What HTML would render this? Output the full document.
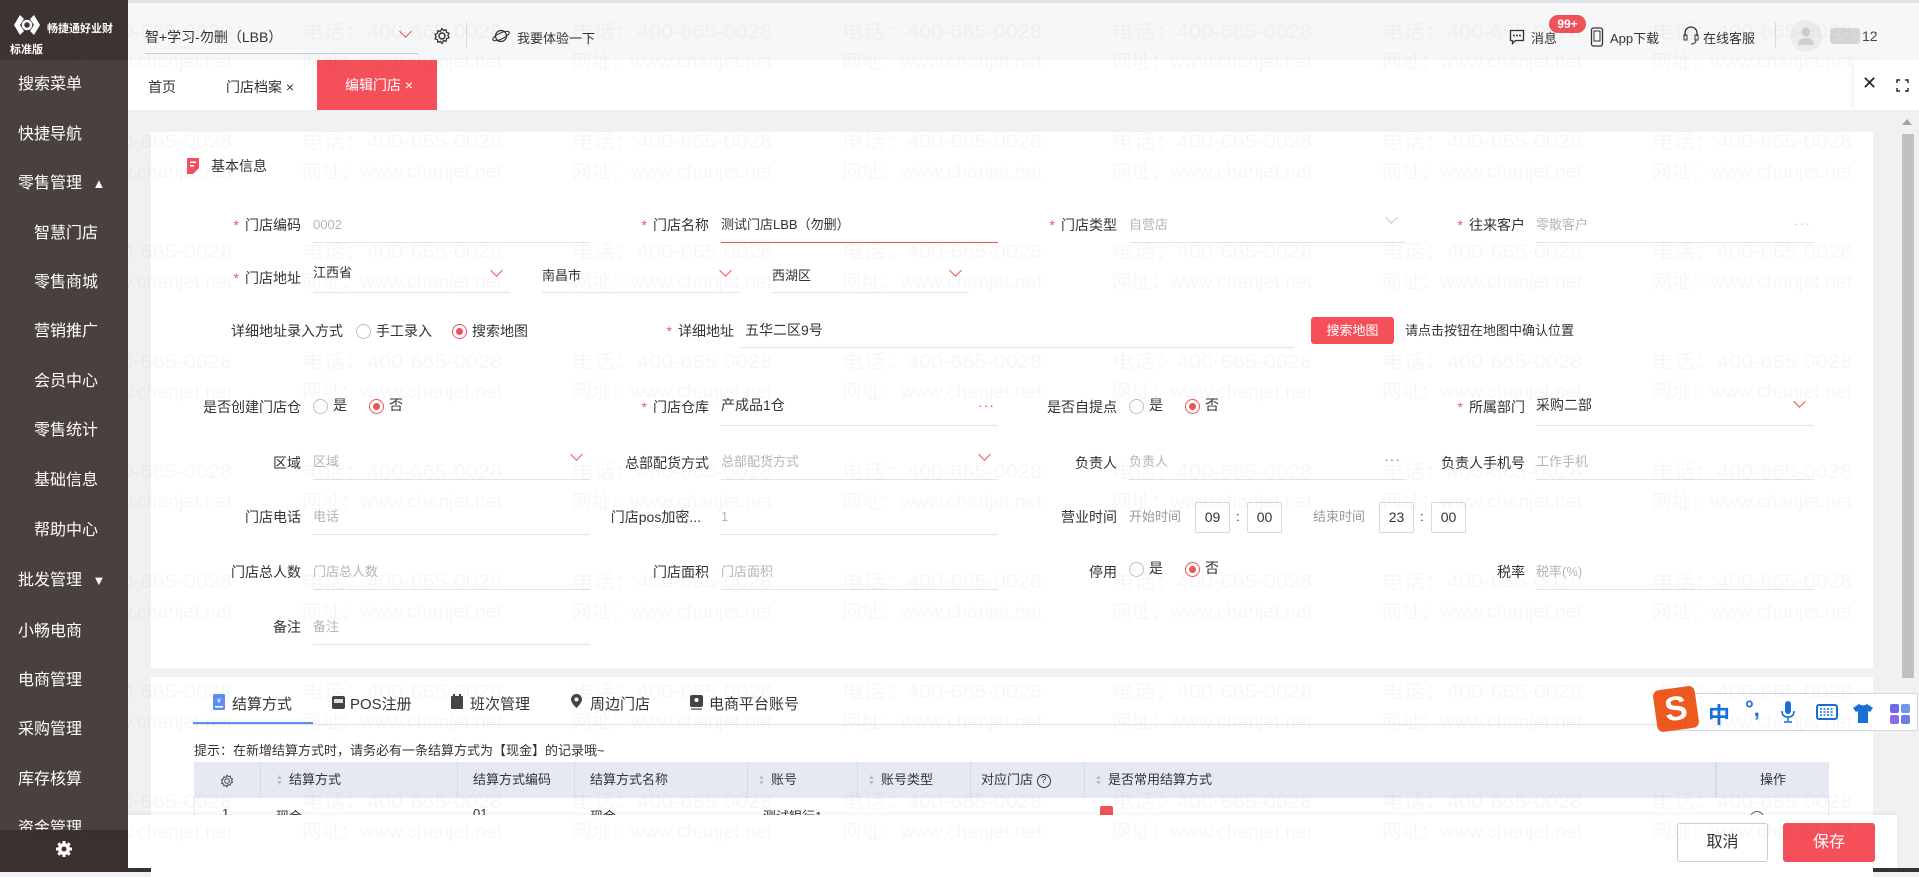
<!DOCTYPE html>
<html><head><meta charset="utf-8">
<style>
*{margin:0;padding:0;box-sizing:border-box}
body{width:1919px;height:872px;overflow:hidden;position:relative;background:#f0f1f3;font-family:"Liberation Sans","Noto Sans CJK SC",sans-serif;color:#333;font-size:13px}
.a{position:absolute;white-space:nowrap}
#side{left:0;top:0;width:128px;height:868px;background:#4a413e}
#logo{left:0;top:0;width:128px;height:60px;background:#3d3331}
.mi{position:absolute;color:#fff;font-size:16px;line-height:20px}
#hdr{left:128px;top:0;width:1791px;height:60px;background:#f6f7f9;border-top:3px solid #e2e3e5}
#tabs{left:128px;top:60px;width:1791px;height:50px;background:#fff}
.lbl{position:absolute;text-align:right;font-size:14px;color:#333;line-height:20px}
.req::before{content:"*";color:#f0525a;margin-right:6px}
.val{position:absolute;font-size:13px;line-height:20px}
.ph{color:#b5b5b5}
.ul{position:absolute;height:1px;background:#e3e3e3}
.arr{position:absolute;width:9px;height:9px;border-right:1.3px solid #f0525a;border-bottom:1.3px solid #f0525a;transform:rotate(45deg)}
.arr.g{border-color:#c8c8c8}
.dots{position:absolute;color:#f0525a;font-size:14px;letter-spacing:1px;line-height:10px}
.rd{position:absolute;width:15px;height:15px;border:1px solid #bfbfbf;border-radius:50%;background:#fff}
.rd.on{border-color:#f0525a}
.rd.on::after{content:"";position:absolute;left:3px;top:3px;width:7px;height:7px;border-radius:50%;background:#f0525a}
.tb{position:absolute;width:35px;height:31px;border:1px solid #d9d9d9;border-radius:2px;text-align:center;line-height:29px;font-size:14px}
.th{position:absolute;top:762px;height:36px;line-height:36px;font-size:13px;color:#333;border-right:1px solid #d5dbe6}
.sort{display:inline-block;width:8px;margin-right:5px;color:#bbb;font-size:7px;line-height:6px;vertical-align:middle}
</style></head><body>

<div id="side" class="a"></div>
<div id="logo" class="a">
  <svg class="a" style="left:12px;top:13px" width="30" height="24" viewBox="0 0 30 24"><path d="M8 2 L2 12 L8 22 L12 18 L8 12 L12 6Z M22 2 L28 12 L22 22 L18 18 L22 12 L18 6Z" fill="#fff"/><circle cx="15" cy="12" r="4" fill="none" stroke="#fff" stroke-width="2.5"/></svg>
  <div class="a" style="left:47px;top:20px;color:#fff;font-size:11px;font-weight:bold">畅捷通好业财</div>
  <div class="a" style="left:10px;top:41px;color:#fff;font-size:11px;font-weight:bold">标准版</div>
</div>
<div class="mi" style="left:18px;top:75px">搜索菜单</div>
<div class="mi" style="left:18px;top:125px">快捷导航</div>
<div class="mi" style="left:18px;top:174px">零售管理 <span style="font-size:13px;margin-left:6px">▲</span></div>
<div class="mi" style="left:34px;top:224px">智慧门店</div>
<div class="mi" style="left:34px;top:273px">零售商城</div>
<div class="mi" style="left:34px;top:322px">营销推广</div>
<div class="mi" style="left:34px;top:372px">会员中心</div>
<div class="mi" style="left:34px;top:421px">零售统计</div>
<div class="mi" style="left:34px;top:471px">基础信息</div>
<div class="mi" style="left:34px;top:521px">帮助中心</div>
<div class="mi" style="left:18px;top:571px">批发管理 <span style="font-size:13px;margin-left:6px">▼</span></div>
<div class="mi" style="left:18px;top:622px">小畅电商</div>
<div class="mi" style="left:18px;top:671px">电商管理</div>
<div class="mi" style="left:18px;top:720px">采购管理</div>
<div class="mi" style="left:18px;top:770px">库存核算</div>
<div class="mi" style="left:18px;top:819px">资金管理</div>
<div class="a" style="left:0;top:830px;width:128px;height:38px;background:#3b302e"></div>
<svg class="a" style="left:55px;top:840px" width="18" height="18" viewBox="0 0 18 18"><circle cx="9" cy="9" r="6" fill="#fff"/><g stroke="#fff" stroke-width="3"><line x1="9" y1="1" x2="9" y2="17"/><line x1="1" y1="9" x2="17" y2="9"/><line x1="3.3" y1="3.3" x2="14.7" y2="14.7"/><line x1="14.7" y1="3.3" x2="3.3" y2="14.7"/></g><circle cx="9" cy="9" r="2.5" fill="#3b302e"/></svg>
<div class="a" style="left:0;top:868px;width:1919px;height:4px;background:#3b302e"></div>

<div id="hdr" class="a"></div>
<div class="a" style="left:145px;top:27px;font-size:14px">智+学习-勿删（LBB）</div>
<div class="a" style="left:145px;top:53px;width:273px;height:1px;background:#ccc"></div>
<div class="arr" style="left:401px;top:27px"></div>
<svg class="a" style="left:433px;top:27px" width="18" height="18" viewBox="0 0 18 18"><circle cx="9" cy="9" r="3" fill="none" stroke="#333" stroke-width="1.4"/><path d="M9 1.5l1.6 2 2.5-.8.4 2.6 2.5.9-1.1 2.3 1.1 2.3-2.5.9-.4 2.6-2.5-.8L9 16.5l-1.6-2-2.5.8-.4-2.6-2.5-.9L3.1 9.5 2 7.2l2.5-.9.4-2.6 2.5.8Z" fill="none" stroke="#333" stroke-width="1.3"/></svg>
<div class="a" style="left:466px;top:22px;width:1px;height:26px;background:#ddd"></div>
<svg class="a" style="left:492px;top:28px" width="18" height="16" viewBox="0 0 18 16"><circle cx="9" cy="8" r="5.5" fill="none" stroke="#333" stroke-width="1.2"/><ellipse cx="9" cy="8" rx="9" ry="3" fill="none" stroke="#333" stroke-width="1.1" transform="rotate(-25 9 8)"/></svg>
<div class="a" style="left:517px;top:28px;font-size:13px">我要体验一下</div>
<svg class="a" style="left:1509px;top:29px" width="16" height="18" viewBox="0 0 16 18"><path d="M1.5 1.5h13v10h-8l-3 3v-3h-2z" fill="none" stroke="#333" stroke-width="1.3"/><circle cx="5" cy="6.5" r="1" fill="#333"/><circle cx="8" cy="6.5" r="1" fill="#333"/><circle cx="11" cy="6.5" r="1" fill="#333"/></svg>
<div class="a" style="left:1531px;top:28px;font-size:13px">消息</div>
<div class="a" style="left:1549px;top:15px;width:37px;height:18px;background:#f0525a;border-radius:9px;color:#fff;font-size:12px;font-weight:bold;text-align:center;line-height:18px">99+</div>
<svg class="a" style="left:1590px;top:27px" width="14" height="20" viewBox="0 0 14 20"><rect x="1.5" y="1" width="11" height="18" rx="2" fill="none" stroke="#333" stroke-width="1.3"/><rect x="4" y="4" width="6" height="10" fill="none" stroke="#333"/></svg>
<div class="a" style="left:1610px;top:28px;font-size:13px">App下载</div>
<svg class="a" style="left:1683px;top:26px" width="16" height="20" viewBox="0 0 16 20"><path d="M2 10V7a6 6 0 0 1 12 0v3" fill="none" stroke="#333" stroke-width="1.3"/><rect x="1" y="9" width="3" height="5" fill="none" stroke="#333"/><rect x="12" y="9" width="3" height="5" fill="none" stroke="#333"/><path d="M13 14q0 4-5 4" fill="none" stroke="#333"/></svg>
<div class="a" style="left:1703px;top:28px;font-size:13px">在线客服</div>
<div class="a" style="left:1775px;top:22px;width:1px;height:26px;background:#ddd"></div>
<div class="a" style="left:1790px;top:20px;width:32px;height:32px;border-radius:50%;background:#ececec"></div>
<svg class="a" style="left:1797px;top:26px" width="18" height="20" viewBox="0 0 18 20"><circle cx="9" cy="6" r="4.5" fill="#cfcfcf"/><path d="M1 19q0-7 8-7t8 7z" fill="#cfcfcf"/></svg>
<div class="a" style="left:1830px;top:28px;width:30px;height:16px;background:#d6d6d6;border-radius:3px"></div>
<div class="a" style="left:1862px;top:28px;font-size:14px;color:#444">12</div>

<div id="tabs" class="a"></div>
<div class="a" style="left:148px;top:77px;font-size:14px">首页</div>
<div class="a" style="left:226px;top:77px;font-size:14px">门店档案 ×</div>
<div class="a" style="left:317px;top:60px;width:120px;height:50px;background:#f5505a;color:#fff;font-size:14px;line-height:50px;padding-left:28px">编辑门店 ×</div>
<div class="a" style="left:1854px;top:60px;width:32px;height:50px;background:#fff;box-shadow:-2px 0 4px rgba(0,0,0,.06)"></div>
<div class="a" style="left:1862px;top:73px;font-size:18px;color:#222">✕</div>
<svg class="a" style="left:1896px;top:79px" width="13" height="13" viewBox="0 0 13 13"><path d="M1 4V1h3M9 1h3v3M12 9v3H9M4 12H1V9" fill="none" stroke="#222" stroke-width="1.4"/></svg>

<div class="a" style="left:1897px;top:110px;width:22px;height:705px;background:#f1f1f1"></div>
<div class="a" style="left:1902px;top:119px;width:0;height:0;border-left:5px solid transparent;border-right:5px solid transparent;border-bottom:6px solid #a3a3a3"></div>
<div class="a" style="left:1902px;top:134px;width:12px;height:544px;background:#c1c1c1"></div>

<div class="a" style="left:151px;top:132px;width:1722px;height:536px;background:#fff"></div>
<svg class="a" style="left:187px;top:158px" width="12" height="16" viewBox="0 0 12 16"><path d="M0 0h12v10l-6 6H0z" fill="#f0525a"/><rect x="3" y="3.5" width="6" height="1.6" fill="#fff"/><rect x="3" y="7" width="4" height="1.6" fill="#fff"/></svg>
<div class="a" style="left:211px;top:156px;font-size:14px">基本信息</div>

<div class="lbl req" style="left:200px;width:101px;top:215px">门店编码</div>
<div class="val ph" style="left:313px;top:215px">0002</div>
<div class="ul" style="left:313px;top:242px;width:277px"></div>
<div class="lbl req" style="left:600px;width:109px;top:215px">门店名称</div>
<div class="val" style="left:721px;top:215px">测试门店LBB（勿删）</div>
<div class="ul" style="left:721px;top:242px;width:277px;background:#f0525a"></div>
<div class="lbl req" style="left:1000px;width:117px;top:215px">门店类型</div>
<div class="val ph" style="left:1129px;top:215px">自营店</div>
<div class="arr g" style="left:1387px;top:213px"></div>
<div class="ul" style="left:1129px;top:242px;width:277px"></div>
<div class="lbl req" style="left:1400px;width:125px;top:215px">往来客户</div>
<div class="val ph" style="left:1536px;top:215px">零散客户</div>
<div class="dots" style="left:1794px;top:218px;color:#ccc">···</div>
<div class="ul" style="left:1536px;top:242px;width:278px"></div>

<div class="lbl req" style="left:200px;width:101px;top:268px">门店地址</div>
<div class="val" style="left:313px;top:263px">江西省</div>
<div class="arr" style="left:492px;top:266px"></div>
<div class="ul" style="left:313px;top:292px;width:197px"></div>
<div class="val" style="left:542px;top:266px">南昌市</div>
<div class="arr" style="left:721px;top:266px"></div>
<div class="ul" style="left:542px;top:292px;width:197px"></div>
<div class="val" style="left:772px;top:266px">西湖区</div>
<div class="arr" style="left:951px;top:266px"></div>
<div class="ul" style="left:772px;top:292px;width:197px"></div>

<div class="lbl" style="left:200px;width:143px;top:321px">详细地址录入方式</div>
<div class="rd" style="left:356px;top:324px"></div>
<div class="val" style="left:376px;top:321px;font-size:14px">手工录入</div>
<div class="rd on" style="left:452px;top:324px"></div>
<div class="val" style="left:472px;top:321px;font-size:14px">搜索地图</div>
<div class="lbl req" style="left:600px;width:134px;top:321px">详细地址</div>
<div class="val" style="left:745px;top:320px;font-size:14px">五华二区9号</div>
<div class="ul" style="left:741px;top:347px;width:553px"></div>
<div class="a" style="left:1311px;top:317px;width:83px;height:27px;background:#f5505a;border-radius:3px;color:#fff;font-size:13px;text-align:center;line-height:27px">搜索地图</div>
<div class="val" style="left:1405px;top:321px">请点击按钮在地图中确认位置</div>

<div class="lbl" style="left:150px;width:151px;top:397px">是否创建门店仓</div>
<div class="rd" style="left:313px;top:399px"></div>
<div class="val" style="left:333px;top:395px;font-size:14px">是</div>
<div class="rd on" style="left:369px;top:399px"></div>
<div class="val" style="left:389px;top:395px;font-size:14px">否</div>
<div class="lbl req" style="left:600px;width:109px;top:397px">门店仓库</div>
<div class="val" style="left:721px;top:395px;font-size:14px">产成品1仓</div>
<div class="dots" style="left:978px;top:400px">···</div>
<div class="ul" style="left:721px;top:425px;width:277px"></div>
<div class="lbl" style="left:1000px;width:117px;top:397px">是否自提点</div>
<div class="rd" style="left:1129px;top:399px"></div>
<div class="val" style="left:1149px;top:395px;font-size:14px">是</div>
<div class="rd on" style="left:1185px;top:399px"></div>
<div class="val" style="left:1205px;top:395px;font-size:14px">否</div>
<div class="lbl req" style="left:1400px;width:125px;top:397px">所属部门</div>
<div class="val" style="left:1536px;top:395px;font-size:14px">采购二部</div>
<div class="arr" style="left:1795px;top:397px"></div>
<div class="ul" style="left:1536px;top:425px;width:278px"></div>

<div class="lbl" style="left:200px;width:101px;top:453px">区域</div>
<div class="val ph" style="left:313px;top:452px">区域</div>
<div class="arr" style="left:572px;top:450px"></div>
<div class="ul" style="left:313px;top:479px;width:277px"></div>
<div class="lbl" style="left:600px;width:109px;top:453px">总部配货方式</div>
<div class="val ph" style="left:721px;top:452px">总部配货方式</div>
<div class="arr" style="left:980px;top:450px"></div>
<div class="ul" style="left:721px;top:479px;width:277px"></div>
<div class="lbl" style="left:1000px;width:117px;top:453px">负责人</div>
<div class="val ph" style="left:1129px;top:452px">负责人</div>
<div class="dots" style="left:1384px;top:454px">···</div>
<div class="ul" style="left:1129px;top:479px;width:277px"></div>
<div class="lbl" style="left:1400px;width:125px;top:453px">负责人手机号</div>
<div class="val ph" style="left:1536px;top:452px">工作手机</div>
<div class="ul" style="left:1536px;top:479px;width:278px"></div>

<div class="lbl" style="left:200px;width:101px;top:507px">门店电话</div>
<div class="val ph" style="left:313px;top:507px">电话</div>
<div class="ul" style="left:313px;top:534px;width:277px"></div>
<div class="lbl" style="left:600px;width:101px;top:507px">门店pos加密...</div>
<div class="val ph" style="left:721px;top:507px">1</div>
<div class="ul" style="left:721px;top:534px;width:277px"></div>
<div class="lbl" style="left:1000px;width:117px;top:507px">营业时间</div>
<div class="val ph" style="left:1129px;top:507px;color:#999">开始时间</div>
<div class="tb" style="left:1195px;top:502px">09</div>
<div class="val" style="left:1236px;top:507px">:</div>
<div class="tb" style="left:1247px;top:502px">00</div>
<div class="val" style="left:1313px;top:507px;color:#999">结束时间</div>
<div class="tb" style="left:1379px;top:502px">23</div>
<div class="val" style="left:1420px;top:507px">:</div>
<div class="tb" style="left:1431px;top:502px">00</div>

<div class="lbl" style="left:200px;width:101px;top:562px">门店总人数</div>
<div class="val ph" style="left:313px;top:562px">门店总人数</div>
<div class="ul" style="left:313px;top:589px;width:277px"></div>
<div class="lbl" style="left:600px;width:109px;top:562px">门店面积</div>
<div class="val ph" style="left:721px;top:562px">门店面积</div>
<div class="ul" style="left:721px;top:589px;width:277px"></div>
<div class="lbl" style="left:1000px;width:117px;top:562px">停用</div>
<div class="rd" style="left:1129px;top:562px"></div>
<div class="val" style="left:1149px;top:558px;font-size:14px">是</div>
<div class="rd on" style="left:1185px;top:562px"></div>
<div class="val" style="left:1205px;top:558px;font-size:14px">否</div>
<div class="lbl" style="left:1400px;width:125px;top:562px">税率</div>
<div class="val ph" style="left:1536px;top:562px">税率(%)</div>
<div class="ul" style="left:1536px;top:589px;width:278px"></div>

<div class="lbl" style="left:200px;width:101px;top:617px">备注</div>
<div class="val ph" style="left:313px;top:617px">备注</div>
<div class="ul" style="left:313px;top:644px;width:277px"></div>

<div class="a" style="left:151px;top:677px;width:1722px;height:200px;background:#fff"></div>
<svg class="a" style="left:213px;top:694px" width="12" height="16" viewBox="0 0 12 16"><rect width="12" height="16" rx="1.5" fill="#5b8ff0"/><rect x="2" y="12" width="8" height="1.5" fill="#fff"/><text x="6" y="9" font-size="7" fill="#fff" text-anchor="middle">¥</text></svg>
<div class="a" style="left:232px;top:693px;font-size:15px;color:#333">结算方式</div>
<svg class="a" style="left:332px;top:696px" width="13" height="13" viewBox="0 0 13 13"><rect width="13" height="13" rx="2" fill="#444"/><rect x="2" y="3" width="9" height="4" fill="#ddd"/></svg>
<div class="a" style="left:350px;top:693px;font-size:15px;color:#333">POS注册</div>
<svg class="a" style="left:451px;top:694px" width="12" height="15" viewBox="0 0 12 15"><rect y="2" width="12" height="13" rx="1" fill="#444"/><rect x="2" width="2" height="4" fill="#444"/><rect x="8" width="2" height="4" fill="#444"/></svg>
<div class="a" style="left:470px;top:693px;font-size:15px;color:#333">班次管理</div>
<svg class="a" style="left:571px;top:694px" width="11" height="16" viewBox="0 0 11 16"><path d="M5.5 0A5.5 5.5 0 0 0 0 5.5C0 9 5.5 14 5.5 14S11 9 11 5.5A5.5 5.5 0 0 0 5.5 0z" fill="#444"/><circle cx="5.5" cy="5.5" r="2" fill="#fff"/></svg>
<div class="a" style="left:590px;top:693px;font-size:15px;color:#333">周边门店</div>
<svg class="a" style="left:690px;top:695px" width="13" height="15" viewBox="0 0 13 15"><rect width="13" height="12" rx="2" fill="#444"/><circle cx="6.5" cy="5" r="2" fill="#fff"/><rect x="1" y="13.5" width="11" height="1.2" fill="#444"/></svg>
<div class="a" style="left:709px;top:693px;font-size:15px;color:#333">电商平台账号</div>
<div class="a" style="left:193px;top:724px;width:1637px;height:1px;background:#e3e3e3"></div>
<div class="a" style="left:193px;top:722px;width:120px;height:2px;background:#5b8ff0"></div>
<div class="a" style="left:194px;top:740px;font-size:13px;color:#333">提示：在新增结算方式时，请务必有一条结算方式为【现金】的记录哦~</div>

<div class="a" style="left:194px;top:762px;width:1635px;height:36px;background:#e4e9f3"></div>
<div class="th" style="left:194px;width:67px;text-align:center"><svg style="vertical-align:middle" width="14" height="14" viewBox="0 0 18 18"><path d="M9 1.5l1.6 2 2.5-.8.4 2.6 2.5.9-1.1 2.3 1.1 2.3-2.5.9-.4 2.6-2.5-.8L9 16.5l-1.6-2-2.5.8-.4-2.6-2.5-.9L3.1 9.5 2 7.2l2.5-.9.4-2.6 2.5.8Z" fill="none" stroke="#555" stroke-width="1.4"/><circle cx="9" cy="9" r="3" fill="none" stroke="#555" stroke-width="1.4"/></svg></div>
<div class="th" style="left:261px;width:197px;padding-left:15px"><span class="sort">▲<br>▼</span>结算方式</div>
<div class="th" style="left:458px;width:117px;padding-left:15px">结算方式编码</div>
<div class="th" style="left:575px;width:173px;padding-left:15px">结算方式名称</div>
<div class="th" style="left:748px;width:110px;padding-left:10px"><span class="sort">▲<br>▼</span>账号</div>
<div class="th" style="left:858px;width:113px;padding-left:10px"><span class="sort">▲<br>▼</span>账号类型</div>
<div class="th" style="left:971px;width:114px;padding-left:10px">对应门店 <span style="display:inline-block;width:14px;height:14px;border:1.3px solid #333;border-radius:50%;font-size:10px;line-height:12px;text-align:center;vertical-align:middle">?</span></div>
<div class="th" style="left:1085px;width:631px;padding-left:10px"><span class="sort">▲<br>▼</span>是否常用结算方式</div>
<div class="th" style="left:1716px;width:113px;text-align:center;border-right:none;border-left:1px solid #d5dbe6">操作</div>
<div class="a" style="left:194px;top:798px;width:1635px;height:20px;border-left:1px solid #e8e8e8;border-right:1px solid #e8e8e8"></div>
<div class="a" style="left:222px;top:806px">1</div>
<div class="a" style="left:276px;top:806px">现金</div>
<div class="a" style="left:473px;top:806px">01</div>
<div class="a" style="left:590px;top:806px">现金</div>
<div class="a" style="left:763px;top:806px">测试银行1</div>
<div class="a" style="left:1100px;top:806px;width:13px;height:13px;background:#f0525a;border-radius:2px"></div>
<div class="a" style="left:1750px;top:811px;width:14px;height:14px;border:1px solid #666;border-radius:50%"></div>

<div class="a" style="left:128px;top:815px;width:1769px;height:53px;background:#fff;box-shadow:0 -2px 4px rgba(0,0,0,.05)"></div>
<div class="a" style="left:1677px;top:823px;width:91px;height:39px;border:1px solid #ccc;border-radius:3px;background:#fff;font-size:16px;text-align:center;line-height:37px">取消</div>
<div class="a" style="left:1783px;top:823px;width:92px;height:39px;border-radius:3px;background:#f5505a;color:#fff;font-size:16px;text-align:center;line-height:39px">保存</div>

<div class="a" style="left:1660px;top:693px;width:258px;height:38px;background:#fff;border:1px solid #cfd7ea;border-radius:3px"></div>
<div class="a" style="left:1655px;top:688px;width:42px;height:42px;background:#f05a1e;border-radius:6px;transform:rotate(-8deg);color:#fff;font-size:34px;font-weight:bold;text-align:center;line-height:42px">S</div>
<div class="a" style="left:1708px;top:698px;font-size:22px;font-weight:bold;color:#1a6fd6">中</div>
<div class="a" style="left:1745px;top:696px;font-size:22px;font-weight:bold;color:#1a6fd6">°,</div>
<svg class="a" style="left:1781px;top:701px" width="14" height="22" viewBox="0 0 14 22"><rect x="4" y="0" width="6" height="13" rx="3" fill="#1a6fd6"/><path d="M1 10q0 6 6 6t6-6M7 16v4M3 21h8" fill="none" stroke="#1a6fd6" stroke-width="1.6"/></svg>
<svg class="a" style="left:1816px;top:704px" width="22" height="16" viewBox="0 0 22 16"><rect x="1" y="1" width="20" height="14" rx="2" fill="none" stroke="#1a6fd6" stroke-width="2"/><path d="M4 5h14M4 8h14M4 11h14" stroke="#1a6fd6" stroke-width="1.5" stroke-dasharray="2 1.5"/></svg>
<svg class="a" style="left:1852px;top:703px" width="22" height="20" viewBox="0 0 22 20"><path d="M7 1L1 5l3 4 2-1v12h10V8l2 1 3-4-6-4q-4 3-8 0z" fill="#1a6fd6"/></svg>
<svg class="a" style="left:1890px;top:704px" width="20" height="20" viewBox="0 0 20 20"><rect width="9" height="9" rx="2" fill="#6b6be8"/><rect x="11" width="9" height="9" rx="2" fill="#6b9be8"/><rect y="11" width="9" height="9" rx="2" fill="#8b6be8"/><rect x="11" y="11" width="9" height="9" rx="2" fill="#6b7be8"/></svg>

<svg class="a" style="left:0;top:0;pointer-events:none" width="1919" height="872">
<defs><pattern id="wm" x="0" y="0" width="270" height="110" patternUnits="userSpaceOnUse">
<text x="32" y="38" font-family="Liberation Sans,Noto Sans CJK SC,sans-serif" font-size="19" textLength="200" lengthAdjust="spacingAndGlyphs" fill="rgba(0,0,0,0.03)">电话：400-665-0028</text>
<text x="32" y="68" font-family="Liberation Sans,Noto Sans CJK SC,sans-serif" font-size="19" textLength="200" lengthAdjust="spacingAndGlyphs" fill="rgba(0,0,0,0.03)">网址：www.chanjet.net</text>
</pattern></defs>
<rect width="1919" height="872" fill="url(#wm)"/>
</svg>
</body></html>
